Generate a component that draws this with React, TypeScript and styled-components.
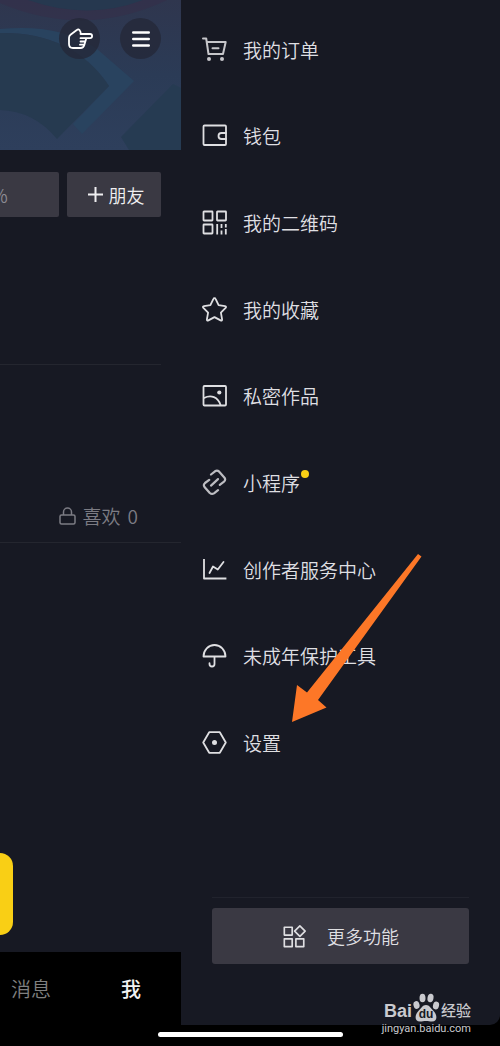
import React from "react";
import styled, { createGlobalStyle, css } from "styled-components";

const GlobalStyle = createGlobalStyle`
  *, *::before, *::after { box-sizing: border-box; }
  body {
    margin: 0;
    background: #000;
    color: #dfdfe2;
    font-family: "Noto Sans CJK SC", sans-serif;
    font-weight: 350;
  }
  button {
    border: 0;
    padding: 0;
    color: inherit;
    font: inherit;
    cursor: pointer;
  }
  a { color: inherit; text-decoration: none; }
  ul { margin: 0; padding: 0; list-style: none; }
`;

const Page = styled.div`
  position: relative;
  display: flex;
  flex-direction: column;
  min-height: 100vh;
  overflow: hidden;
`;

const Screen = styled.div`
  flex: 1;
  display: flex;
  background: #171923;
  border-radius: 0 0 10px 0;
`;

const Profile = styled.main`
  flex: 0 0 181px;
  display: flex;
  flex-direction: column;
  overflow: hidden;
`;

const Banner = styled.header`
  position: relative;
  height: 150px;
  background: linear-gradient(#2f364e, #2b3b56 50%, #2e3f5c);
`;

const BannerArt = styled.svg`
  position: absolute;
  inset: 0;
`;

const BannerActions = styled.div`
  position: relative;
  display: flex;
  justify-content: flex-end;
  gap: 20px;
  padding: 18px 20px 0 0;
`;

const RoundButton = styled.button`
  display: grid;
  place-items: center;
  width: 41px;
  height: 41px;
  border-radius: 50%;
  background: rgba(36, 40, 56, 0.8);
  color: #fff;
`;

const ProfileActions = styled.div`
  display: flex;
  gap: 8px;
  margin: 22px 20px 0 -60px;
`;

const ProfileButton = styled.button<{ $muted?: boolean }>`
  display: flex;
  align-items: center;
  justify-content: center;
  gap: 6px;
  height: 45px;
  flex: ${(p) => (p.$muted ? "1" : "0 0 94px")};
  padding-left: ${(p) => (p.$muted ? "0" : "4px")};
  border-radius: 2px;
  background: #3a3943;
  color: ${(p) => (p.$muted ? "#8c8b93" : "#efeff1")};
  font-size: 18px;
`;

const Summary = styled.section`
  height: 148px;
  margin-right: 20px;
  border-bottom: 1px solid #24262f;
`;

const LikesTab = styled.a`
  display: flex;
  align-items: flex-end;
  justify-content: flex-end;
  height: 178px;
  padding: 0 43px 11px 0;
  gap: 7px;
  border-bottom: 1px solid #24262f;
  color: #7c7c84;
  font-size: 19px;
  line-height: 30px;

  svg { margin-bottom: 6px; }
`;

const Works = styled.section`
  flex: 1;
  display: flex;
  align-items: flex-end;
  padding-bottom: 17px;
`;

const YellowCard = styled.div`
  width: 13px;
  height: 82px;
  border-radius: 0 13px 13px 0;
  background: #f9cf15;
`;

const TabBar = styled.nav`
  display: flex;
  height: 73px;
  margin-left: -19px;
  background: #000;
`;

const Tab = styled.a<{ $active?: boolean }>`
  flex: 1;
  text-align: center;
  font-size: 20px;
  line-height: 74px;
  font-weight: ${(p) => (p.$active ? 500 : 350)};
  color: ${(p) => (p.$active ? "#f2f2f2" : "#808080")};
`;

const Drawer = styled.aside`
  flex: 1;
  min-width: 0;
  display: flex;
  flex-direction: column;
  justify-content: space-between;
`;

const Menu = styled.ul`
  display: grid;
  grid-auto-rows: 1fr;
  height: 780px;
  margin-top: 6px;
`;

const MenuLink = styled.a`
  display: flex;
  align-items: center;
  height: 100%;
  gap: 15px;
  padding-left: 20px;
  font-size: 19px;
`;

const Label = styled.span<{ $dot?: boolean }>`
  position: relative;
  ${(p) =>
    p.$dot &&
    css`
      &::after {
        content: "";
        position: absolute;
        top: 1px;
        right: -9px;
        width: 8px;
        height: 8px;
        border-radius: 50%;
        background: #f9cf15;
      }
    `}
`;

const DrawerFooter = styled.footer`
  margin: 0 31px 61px;
  padding-top: 10px;
  border-top: 1px solid #21232d;
`;

const MoreButton = styled.button`
  display: flex;
  align-items: center;
  justify-content: center;
  gap: 20px;
  width: 100%;
  height: 56px;
  border-radius: 3px;
  background: #3a3943;
  font-size: 18px;
`;

const HomeArea = styled.div`
  display: flex;
  justify-content: center;
  height: 21px;
  padding-top: 7px;
`;

const HomeIndicator = styled.div`
  width: 37%;
  height: 5px;
  border-radius: 3px;
  background: #fff;
`;

const Pointer = styled.svg`
  position: absolute;
  top: 553px;
  left: 290px;
  pointer-events: none;
`;

const Watermark = styled.div`
  position: absolute;
  right: 29px;
  bottom: 10px;
  color: #c9c9ce;
`;

const WatermarkBrand = styled.div`
  display: flex;
  align-items: flex-end;
  justify-content: flex-end;
  gap: 1px;
  height: 30px;
  font: 700 18px/22px "Liberation Sans", sans-serif;
`;

const WatermarkCn = styled.span`
  font: 500 15px/24px "Noto Sans CJK SC", sans-serif;
`;

const WatermarkUrl = styled.div`
  font: 400 11px/14px Roboto, sans-serif;
  text-align: right;
`;

const Icon = ({ children, size = 27 }: { children: React.ReactNode; size?: number }) => (
  <svg
    width={size}
    height={size}
    viewBox="0 0 27 27"
    fill="none"
    stroke="currentColor"
    strokeWidth="1.8"
    strokeLinejoin="round"
    strokeLinecap="round"
    aria-hidden="true"
  >
    {children}
  </svg>
);

const menu: { label: string; dot?: boolean; icon: React.ReactNode }[] = [
  {
    label: "我的订单",
    icon: (
      <g stroke="#c6c6ca" strokeWidth="2">
        <path d="M2 2.500h3.200l2.300 15.500h14.500l2.700-12H5.700M11.500 12.300h6" />
        <circle cx="8" cy="23" r="2" fill="#c6c6ca" stroke="none" />
        <circle cx="21" cy="23" r="2" fill="#c6c6ca" stroke="none" />
      </g>
    ),
  },
  {
    label: "钱包",
    icon: (
      <>
        <rect x="2.500" y="3.500" width="22.500" height="19.500" rx="1" />
        <path d="M25 11h-4.500a3 3 0 0 0 0 6H25" />
      </>
    ),
  },
  {
    label: "我的二维码",
    icon: (
      <>
        <rect x="2.500" y="2.500" width="9" height="9" rx=".5" />
        <rect x="16" y="2.500" width="9" height="9" rx=".5" />
        <rect x="2.500" y="15.500" width="9" height="9" rx=".5" />
        <path d="M16.200 15v10.500M24.800 15v3.500M24.800 20v5.500M20.500 15v4M20.500 21.500v4" strokeLinecap="butt" />
      </>
    ),
  },
  {
    label: "我的收藏",
    icon: <path d="M13.500 2.200q.8 0 1.200.9l2.900 6.100 6.400.9q1.800.4.600 1.800l-4.700 4.700 1.200 6.700q.1 1.800-1.500 1.100l-6.100-3.300-6.100 3.300q-1.600.7-1.500-1.100l1.200-6.700-4.700-4.700q-1.200-1.400.6-1.800l6.400-.9 2.900-6.100q.4-.9 1.200-.9z" />,
  },
  {
    label: "私密作品",
    icon: (
      <>
        <rect x="2.500" y="4" width="22.500" height="19.500" rx="1" />
        <path d="M3 16c7-3.500 14-1 16.500 7" />
        <circle cx="18.300" cy="10.500" r="2.100" fill="currentColor" stroke="none" />
      </>
    ),
  },
  {
    label: "小程序",
    dot: true,
    icon: (
      <g strokeWidth="2.200" stroke="#bdbdc2">
        <path d="M10 5.500L14 2.300Q16.200 1 18.200 2.700L23.500 8.700Q25 11 23 12.700L18.800 15.800" />
        <path d="M17 21.200L13 24.400Q10.800 25.700 8.800 24L3.500 18Q2 15.700 4 14L8.200 10.900" />
        <path d="M10 16.600L17 10.100" />
      </g>
    ),
  },
  {
    label: "创作者服务中心",
    icon: (
      <>
        <path d="M3 4v18.500h21.500" strokeLinecap="square" />
        <path d="M8.500 17l3.500-6.500 4.800 3L22.500 6" />
      </>
    ),
  },
  {
    label: "未成年保护工具",
    icon: <path d="M2.500 14.500a11 11.500 0 0 1 22 0zM13.500 14.500v7.500a2.500 2.500 0 0 1-5 0v-.8" />,
  },
  {
    label: "设置",
    icon: (
      <>
        <path d="M8.200 3.200h10.600l6 10.300-6 10.300h-10.600l-6-10.300z" />
        <circle cx="13.500" cy="13.500" r="2.500" fill="currentColor" stroke="none" />
      </>
    ),
  },
];

export default function App() {
  return (
    <>
      <GlobalStyle />
      <Page>
        <Screen>
          <Profile>
            <Banner>
              <BannerArt width="181" height="150" viewBox="0 0 181 150" aria-hidden="true">
                <path d="M0 0H167Q85 39 0 3z" fill="#352f49" opacity=".6" />
                <path d="M28 0H143Q88 21 28 0z" fill="#26384f" />
                <path d="M0 29Q60 23 97 49L134 81 82 134 73 124 109 86Q73 32 0 33z" fill="#29435f" />
                <path d="M0 33Q73 32 109 86L57 139Q34 111 0 110z" fill="#263a50" />
                <path d="M173 84L181 88V150H129L121 137z" fill="#263b52" />
              </BannerArt>
              <BannerActions>
                <RoundButton aria-label="手势">
                  <svg width="26" height="24" viewBox="0 0 26 24" fill="none" stroke="currentColor" strokeWidth="1.800" strokeLinejoin="round" strokeLinecap="round">
                    <path d="M14 7H23a2 2 0 0 1 0 4.200H13.500M13.500 7Q14.300 5.500 12.800 3.500Q11.500 1.500 9.800 3L3.500 7.700Q2 8.800 2 11V17Q2 21 6 21H13.500Q16.500 21 17.300 18L19.300 11.200M13.500 14.500H18M13 17.700H17" />
                  </svg>
                </RoundButton>
                <RoundButton aria-label="菜单">
                  <svg width="18" height="16" viewBox="0 0 18 16" stroke="currentColor" strokeWidth="2.400" strokeLinecap="round">
                    <path d="M1.200 1.500h15.600M1.200 8h15.600M1.200 14.500h15.600" />
                  </svg>
                </RoundButton>
              </BannerActions>
            </Banner>
            <ProfileActions>
              <ProfileButton $muted>%</ProfileButton>
              <ProfileButton>
                <svg width="15" height="15" viewBox="0 0 15 15" stroke="currentColor" strokeWidth="2" aria-hidden="true">
                  <path d="M7.500 0v15M0 7.500h15" />
                </svg>
                朋友
              </ProfileButton>
            </ProfileActions>
            <Summary />
            <LikesTab href="#likes">
              <svg width="17" height="18" viewBox="0 0 17 18" fill="none" stroke="currentColor" strokeWidth="1.500" aria-hidden="true">
                <rect x="1" y="8" width="15" height="9" rx="1.500" />
                <path d="M4.500 8V5a4 4 0 0 1 8 0v3" />
              </svg>
              <span>喜欢</span>
              <span>0</span>
            </LikesTab>
            <Works>
              <YellowCard />
            </Works>
            <TabBar>
              <Tab href="#messages">消息</Tab>
              <Tab href="#me" $active>我</Tab>
            </TabBar>
          </Profile>
          <Drawer>
            <Menu>
              {menu.map((item) => (
                <li key={item.label}>
                  <MenuLink href="#">
                    <Icon>{item.icon}</Icon>
                    <Label $dot={item.dot}>{item.label}</Label>
                  </MenuLink>
                </li>
              ))}
            </Menu>
            <DrawerFooter>
              <MoreButton>
                <Icon size={25}>
                  <rect x="2.500" y="3.500" width="8.500" height="8.500" />
                  <rect x="2.500" y="16" width="8.500" height="8.500" />
                  <rect x="15" y="16" width="8.500" height="8.500" />
                  <path d="M19.300 2l5.700 5.700-5.700 5.700-5.700-5.700z" />
                </Icon>
                更多功能
              </MoreButton>
            </DrawerFooter>
          </Drawer>
        </Screen>
        <HomeArea>
          <HomeIndicator />
        </HomeArea>
        <Pointer width="132" height="170" viewBox="0 0 132 170" aria-hidden="true">
          <path d="M128 1L131.500 3.500 28 147 36.500 154.500 2 169 7 132 17 139.500z" fill="#fd7727" />
        </Pointer>
        <Watermark>
          <WatermarkBrand>
            <span>Bai</span>
            <svg width="27" height="29" viewBox="0 0 27 29" fill="currentColor" aria-hidden="true">
              <ellipse cx="3.500" cy="12" rx="3" ry="4" transform="rotate(-15 3.500 12)" />
              <ellipse cx="9.500" cy="5" rx="3" ry="4.300" />
              <ellipse cx="17.500" cy="5" rx="3" ry="4.300" transform="rotate(10 17.500 5)" />
              <ellipse cx="23" cy="12.500" rx="3" ry="4" transform="rotate(15 23 12.500)" />
              <path d="M13 12c3.500 0 5 3.500 8 6.500s4 10-2 10c-3 0-3-.5-6-.5s-3 .5-6 .5c-6 0-5-7-2-10s4.500-6.500 8-6.500z" />
              <text x="13" y="25" textAnchor="middle" fill="#171923" fontFamily="Liberation Sans" fontSize="12" fontWeight="700">du</text>
            </svg>
            <WatermarkCn>经验</WatermarkCn>
          </WatermarkBrand>
          <WatermarkUrl>jingyan.baidu.com</WatermarkUrl>
        </Watermark>
      </Page>
    </>
  );
}
